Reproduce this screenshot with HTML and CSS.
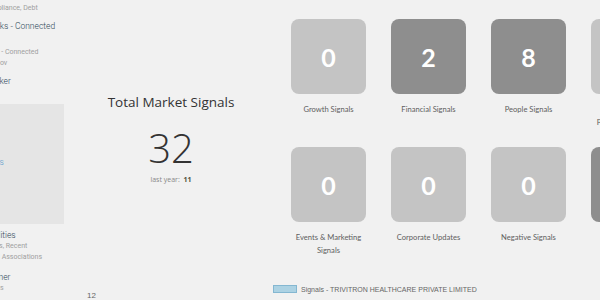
FILE: index.html
```html
<!DOCTYPE html>
<html lang="en">
<head>
    <meta charset="UTF-8">
    <meta name="viewport" content="width=device-width, initial-scale=1.0">
    <title>Market Signals</title>
    <link rel="stylesheet" href="styles.css">
</head>
<body>
    <div class="page">
        <!-- left nav, scrolled partly out of view -->
        <aside class="sidebar">
            <div class="sidebar-inner">
                <div class="nav-item first">
                    <p class="nav-sub">Risk, Platform and</p>
                    <p class="nav-sub">Compliance, Debt</p>
                </div>
                <div class="nav-item">
                    <p class="nav-title">Stocks - Connected</p>
                    <p class="nav-sub gap">Links - Connected</p>
                    <p class="nav-sub">Co. Gov</p>
                </div>
                <div class="nav-item">
                    <p class="nav-title">Tracker</p>
                </div>
                <div class="nav-item active">
                    <p class="nav-title">Deals</p>
                </div>
                <div class="nav-item">
                    <p class="nav-title">Facilities</p>
                    <p class="nav-sub">Plants, Recent</p>
                    <p class="nav-sub">Local Associations</p>
                </div>
                <div class="nav-item last">
                    <p class="nav-title">Partner</p>
                    <p class="nav-sub">Events</p>
                </div>
            </div>
        </aside>

        <section class="summary">
            <h2 class="summary-title">Total Market Signals</h2>
            <div class="summary-count">32</div>
            <p class="summary-last">last year: <strong>11</strong></p>
            <div class="summary-axis">12</div>
        </section>

        <section class="signals">
            <div class="tile-grid">
                <div class="tile-cell">
                    <div class="tile">0</div>
                    <p class="tile-label">Growth Signals</p>
                </div>
                <div class="tile-cell">
                    <div class="tile dark">2</div>
                    <p class="tile-label">Financial Signals</p>
                </div>
                <div class="tile-cell">
                    <div class="tile dark">8</div>
                    <p class="tile-label">People Signals</p>
                </div>
                <div class="tile-cell">
                    <div class="tile">0</div>
                    <p class="tile-label">Expansion &amp; Product Innovation</p>
                </div>
                <div class="tile-cell">
                    <div class="tile">0</div>
                    <p class="tile-label">Events &amp; Marketing Signals</p>
                </div>
                <div class="tile-cell">
                    <div class="tile">0</div>
                    <p class="tile-label">Corporate Updates</p>
                </div>
                <div class="tile-cell">
                    <div class="tile">0</div>
                    <p class="tile-label">Negative Signals</p>
                </div>
                <div class="tile-cell">
                    <div class="tile dark">22</div>
                    <p class="tile-label">Other Signals</p>
                </div>
            </div>

            <div class="legend">
                <span class="legend-swatch"></span>
                <span class="legend-text">Signals - TRIVITRON HEALTHCARE PRIVATE LIMITED</span>
            </div>
        </section>
    </div>
</body>
</html>
```

FILE: styles.css
```css
body {
    margin: 0;
    background-color: #f1f1f1;
    font-family: Roboto, "Liberation Sans", sans-serif;
    overflow: hidden;
}

p {
    margin: 0;
}

.page {
    display: flex;
    width: 600px;
    height: 300px;
    overflow: hidden;
}

/* sidebar */
.sidebar {
    flex: 0 0 64px;
    overflow: hidden;
}

.sidebar-inner {
    width: 81px;
    margin-left: -17px;
    margin-top: -8px;
}

.nav-item {
    margin-top: 6px;
}

.nav-item.first {
    margin-top: 0;
}

.nav-title {
    font-size: 8.5px;
    line-height: 12px;
    font-weight: 300;
    color: #2c4657;
    white-space: nowrap;
}

.nav-sub {
    font-size: 7px;
    line-height: 11px;
    color: #a0a0a0;
    white-space: nowrap;
}

.nav-sub.gap {
    margin-top: 15px;
}

.nav-item.active {
    margin-top: 17px;
    height: 120px;
    box-sizing: border-box;
    padding-top: 52px;
    background-color: #e5e5e5;
}

.nav-item.active .nav-title {
    color: #5b9ccc;
}

.nav-item.active + .nav-item {
    margin-top: 5px;
}

.nav-item.last {
    margin-top: 8px;
}

/* summary */
.summary {
    flex: 0 0 209px;
    box-sizing: border-box;
    padding-left: 5px;
    text-align: center;
    color: #333;
    font-family: "Open Sans", sans-serif;
}

.summary-title {
    margin: 93px 0 0;
    font-size: 13.5px;
    line-height: 18px;
    font-weight: 400;
}

.summary-count {
    margin-top: 13px;
    font-size: 40px;
    line-height: 48px;
    font-weight: 300;
}

.summary-last {
    margin-top: 3px;
    font-size: 7px;
    color: #888;
}

.summary-last strong {
    color: #55523c;
    margin-left: 2px;
}

.summary-axis {
    text-align: left;
    margin: 107px 0 0 18px;
    font-family: "Liberation Sans", sans-serif;
    font-size: 8px;
    color: #666;
}

/* signal tiles */
.signals {
    flex: 1;
}

.tile-grid {
    display: grid;
    grid-template-columns: repeat(4, 75px);
    column-gap: 25px;
    row-gap: 18px;
    padding: 19px 0 0 18px;
}

.tile-cell {
    display: flex;
    flex-direction: column;
    align-items: center;
}

.tile {
    width: 75px;
    height: 75px;
    border-radius: 8px;
    background-color: #c4c4c4;
    color: #fff;
    font-family: Lato, sans-serif;
    font-weight: 700;
    font-size: 25px;
    display: flex;
    align-items: center;
    justify-content: center;
}

.tile.dark {
    background-color: #8e8e8e;
}

.tile-label {
    width: 68px;
    margin-top: 9px;
    height: 26px;
    font-family: Lato, sans-serif;
    font-size: 7.6px;
    line-height: 13px;
    color: #606060;
    text-align: center;
}

.legend {
    display: flex;
    align-items: center;
    gap: 4px;
    margin-top: 28px;
}

.legend-swatch {
    width: 22px;
    height: 6px;
    background-color: #acd2e3;
    border: 1px solid #84b7d1;
}

.legend-text {
    font-family: "Liberation Sans", sans-serif;
    font-size: 7px;
    color: #666;
}
```
